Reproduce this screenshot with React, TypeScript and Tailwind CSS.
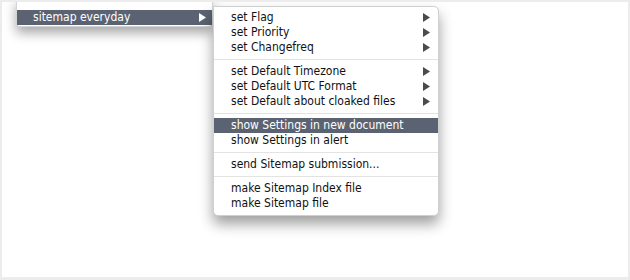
import React from "react";

type Row =
  | { kind: "item"; label: string; sub?: boolean; active?: boolean }
  | { kind: "sep" };

const rows: Row[] = [
  { kind: "item", label: "set Flag", sub: true },
  { kind: "item", label: "set Priority", sub: true },
  { kind: "item", label: "set Changefreq", sub: true },
  { kind: "sep" },
  { kind: "item", label: "set Default Timezone", sub: true },
  { kind: "item", label: "set Default UTC Format", sub: true },
  { kind: "item", label: "set Default about cloaked files", sub: true },
  { kind: "sep" },
  { kind: "item", label: "show Settings in new document", active: true },
  { kind: "item", label: "show Settings in alert" },
  { kind: "sep" },
  { kind: "item", label: "send Sitemap submission..." },
  { kind: "sep" },
  { kind: "item", label: "make Sitemap Index file" },
  { kind: "item", label: "make Sitemap file" },
];

function Arrow({ light }: { light?: boolean }) {
  return (
    <svg width="7" height="9" viewBox="0 0 7 9" className="shrink-0">
      <polygon points="0,0 7,4.5 0,9" fill={light ? "#ffffff" : "#4b4b4b"} />
    </svg>
  );
}

export default function App() {
  return (
    <div
      className="w-[630px] h-[280px] bg-[#ececec] pt-[2px] pl-[2px] pr-[2px] pb-[3px]"
      style={{ fontFamily: '"DejaVu Sans Condensed", "DejaVu Sans", sans-serif' }}
    >
      <div className="relative w-full h-full bg-white overflow-hidden">
        {/* parent menu */}
        <div className="absolute left-[14px] top-[-4px] w-[197px] h-[29px] bg-white border border-[#d4d4d4] rounded-b-[4px] shadow-[0_6px_12px_rgba(0,0,0,0.35)]">
          <div className="mt-[11px] h-[15px] bg-[#5b6372] flex items-center justify-between pl-[16px] pr-[6px] text-white text-[12px] leading-[15px]">
            <span>sitemap everyday</span>
            <Arrow light />
          </div>
        </div>

        {/* submenu */}
        <div className="absolute left-[211px] top-[4px] w-[226px] bg-white border border-[#cfcfcf] rounded-[5px] rounded-tl-none pt-[3px] pb-[4px] shadow-[0_8px_14px_rgba(0,0,0,0.38)] text-[12px] leading-[15px] text-[#111]">
          {rows.map((r, i) =>
            r.kind === "sep" ? (
              <div key={i} className="h-[9px] flex items-center">
                <div className="w-full h-px bg-[#e3e3e3]" />
              </div>
            ) : (
              <div
                key={i}
                className={
                  "h-[15px] flex items-center justify-between pl-[17px] pr-[8px] " +
                  (r.active ? "bg-[#5b6372] text-white" : "")
                }
              >
                <span>{r.label}</span>
                {r.sub && <Arrow light={r.active} />}
              </div>
            )
          )}
        </div>
      </div>
    </div>
  );
}
